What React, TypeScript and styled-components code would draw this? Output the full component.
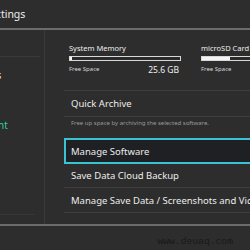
import React from 'react';
import styled, { createGlobalStyle } from 'styled-components';

const GlobalStyle = createGlobalStyle`
    html, body {
        margin: 0;
        padding: 0;
        background: #2d2d2d;
    }
    body {
        font-family: 'Noto Sans', 'Open Sans', sans-serif;
        color: #e8e8e8;
    }
`;

const Screen = styled.div`
    width: 250px;
    height: 250px;
    display: flex;
    flex-direction: column;
    overflow: hidden;
    background: #2d2d2d;
`;

const Header = styled.div`
    height: 28px;
    flex-shrink: 0;
    display: flex;
    align-items: center;
    border-bottom: 2px solid #6c6c6c;
    overflow: hidden;
`;

const Title = styled.h1`
    margin: 0 0 0 -53px;
    font-size: 10.5px;
    font-weight: 400;
    white-space: nowrap;
    color: #eeeeee;
`;

const Body = styled.div`
    height: 194px;
    flex-shrink: 0;
    display: flex;
`;

const LeftNav = styled.nav`
    width: 44px;
    flex-shrink: 0;
    border-right: 1px solid #3a3a3a;
    overflow: hidden;
    display: flex;
    flex-direction: column;
`;

const NavList = styled.div`
    margin-left: -80px;
    width: 120px;
    display: flex;
    flex-direction: column;
`;

type navProps = {
    $active?: boolean;
    $divider?: boolean;
};
const NavItem = styled.div<navProps>`
    height: 24px;
    display: flex;
    align-items: center;
    font-size: 10px;
    white-space: nowrap;
    color: ${(props) => (props.$active ? '#2fd0a2' : '#e6e6e6')};
    border-bottom: ${(props) =>
        props.$divider ? '1px solid #3a3a3a' : '1px solid transparent'};
`;

const NavGap = styled.div`
    height: 6px;
`;

const NavBottom = styled.div`
    margin-top: auto;
    margin-bottom: 9px;
    width: 35px;
    border-bottom: 1px solid #363636;
`;

const Content = styled.div`
    flex: 1;
    padding-left: 19px;
    overflow: hidden;
    display: flex;
    flex-direction: column;
`;

const Storage = styled.div`
    height: 61px;
    flex-shrink: 0;
    padding: 14px 0 0 5px;
    box-sizing: border-box;
    border-bottom: 1px solid #3e3e3e;
    display: flex;
    gap: 20px;
    width: 260px;
`;

const StorageCol = styled.div`
    width: 112px;
    flex-shrink: 0;
    display: flex;
    flex-direction: column;
`;

const StorageName = styled.div`
    font-size: 7.5px;
    line-height: 9px;
    white-space: nowrap;
    color: #ececec;
`;

const Bar = styled.div`
    margin-top: 3px;
    height: 5px;
    box-sizing: border-box;
    border: 1px solid #d8d8d8;
    background: #2a2a2a;
    display: flex;
`;

const BarFill = styled.div`
    height: 100%;
    background: #f4f4f4;
`;

const FreeRow = styled.div`
    margin-top: 3px;
    height: 10px;
    display: flex;
    align-items: center;
    justify-content: space-between;
    padding-right: 2px;
`;

const FreeLabel = styled.span`
    font-size: 6px;
    color: #d6d6d6;
`;

const FreeValue = styled.span`
    font-size: 8.5px;
    color: #f0f0f0;
`;

type rowProps = {
    $selected?: boolean;
    $h: number;
};
const MenuRow = styled.div<rowProps>`
    height: ${(props) => props.$h}px;
    flex-shrink: 0;
    box-sizing: border-box;
    width: 220px;
    display: flex;
    align-items: center;
    padding-left: ${(props) => (props.$selected ? '5px' : '7px')};
    font-size: 9.5px;
    white-space: nowrap;
    color: #ececec;
    border: ${(props) => (props.$selected ? '2px solid #3ac4d3' : 'none')};
    border-bottom: ${(props) =>
        props.$selected ? '2px solid #3ac4d3' : '1px solid #3e3e3e'};
    background: ${(props) => (props.$selected ? '#1f2024' : 'transparent')};
`;

const Description = styled.div`
    height: 12px;
    flex-shrink: 0;
    display: flex;
    align-items: center;
    padding-left: 7px;
    font-size: 6px;
    white-space: nowrap;
    color: #9a9a9a;
    margin-bottom: 9px;
`;

const Footer = styled.div`
    flex: 1;
    border-top: 2px solid #6c6c6c;
    display: flex;
    align-items: flex-end;
    justify-content: flex-end;
    padding: 0 17px 3px 0;
`;

const Watermark = styled.span`
    font-family: 'Liberation Mono', monospace;
    font-size: 9.7px;
    color: #181818;
`;

const storages = [
    { name: 'System Memory', used: 2, free: '25.6 GB' },
    { name: 'microSD Card', used: 28, free: '' },
];

export default function App() {
    return (
        <Screen>
            <GlobalStyle />
            <Header>
                <Title>System Settings</Title>
            </Header>
            <Body>
                <LeftNav>
                    <NavList>
                        <NavItem $divider style={{ height: 26 }}>
                            Screen Lock
                        </NavItem>
                        <NavGap />
                        <NavItem>Parental Controls</NavItem>
                        <NavItem>Internet</NavItem>
                        <NavItem $active>Data Management</NavItem>
                    </NavList>
                    <NavBottom />
                </LeftNav>
                <Content>
                    <Storage>
                        {storages.map((s) => (
                            <StorageCol key={s.name}>
                                <StorageName>{s.name}</StorageName>
                                <Bar>
                                    <BarFill style={{ width: s.used }} />
                                </Bar>
                                <FreeRow>
                                    <FreeLabel>Free Space</FreeLabel>
                                    <FreeValue>{s.free}</FreeValue>
                                </FreeRow>
                            </StorageCol>
                        ))}
                    </Storage>
                    <MenuRow $h={26}>Quick Archive</MenuRow>
                    <Description>
                        Free up space by archiving the selected software.
                    </Description>
                    <MenuRow $h={26} $selected>
                        Manage Software
                    </MenuRow>
                    <MenuRow $h={24}>Save Data Cloud Backup</MenuRow>
                    <MenuRow $h={25}>
                        Manage Save Data / Screenshots and Videos
                    </MenuRow>
                </Content>
            </Body>
            <Footer>
                <Watermark>www.deuaq.com</Watermark>
            </Footer>
        </Screen>
    );
}
